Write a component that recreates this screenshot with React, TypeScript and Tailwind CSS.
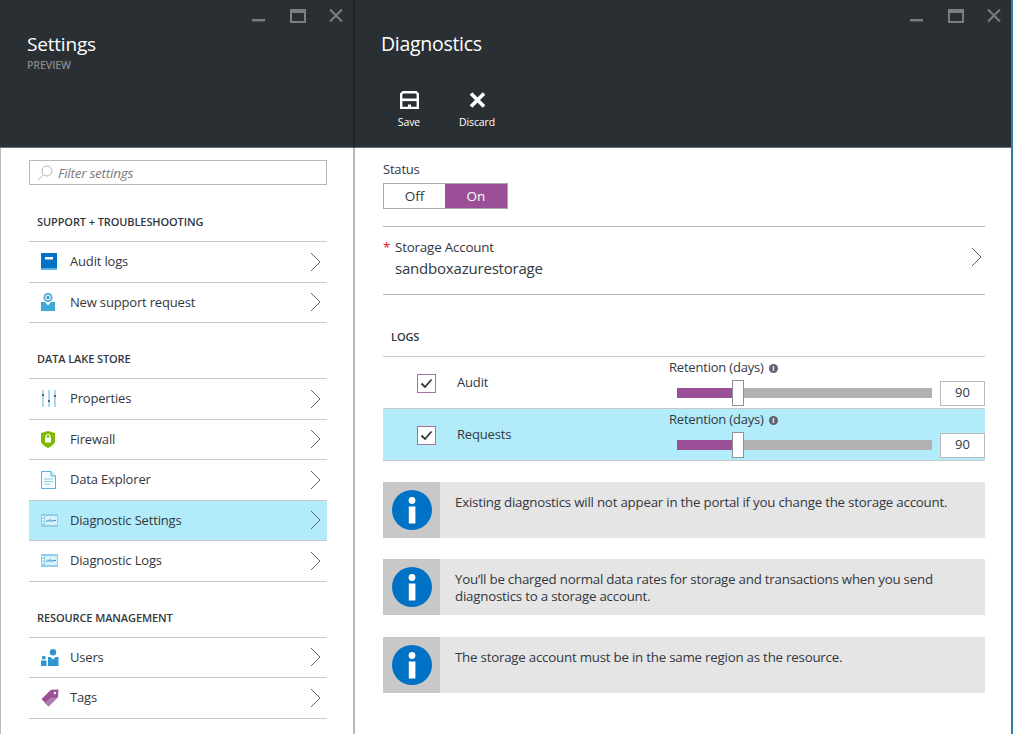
import type { ReactNode } from "react";

const font = "font-['Open_Sans','Noto_Sans',sans-serif]";

function WindowButtons() {
  return (
    <div className="flex h-[30px] items-start justify-end">
      <svg width="102" height="26" viewBox="0 0 102 26" fill="none">
        <rect x="11" y="19" width="13" height="2.4" fill="#7b7e81" />
        <rect x="50" y="10" width="14" height="12" stroke="#7b7e81" strokeWidth="2" />
        <rect x="49" y="9" width="16" height="4" fill="#7b7e81" />
        <path d="M89 9.5 L101 21.5 M101 9.5 L89 21.5" stroke="#7b7e81" strokeWidth="2" />
      </svg>
    </div>
  );
}

function Chevron({ className }: { className?: string }) {
  return (
    <svg width="11" height="20" viewBox="0 0 11 20" fill="none" className={className}>
      <path d="M1 1 L10 10 L1 19" stroke="#5f6368" strokeWidth="1" />
    </svg>
  );
}

function AuditIcon() {
  return (
    <svg width="16" height="18" viewBox="0 0 16 18">
      <rect width="16" height="17" fill="#0072c6" />
      <rect y="15" width="16" height="2" fill="#59b4d9" />
      <rect x="4" y="4" width="8" height="2.5" fill="#fff" />
    </svg>
  );
}

function SupportIcon() {
  return (
    <svg width="14" height="18" viewBox="0 0 14 18">
      <path d="M0 9 L4 9 L7 12.5 L10 9 L14 9 L14 18 L0 18 Z" fill="#3fa9d8" />
      <circle cx="7" cy="4.5" r="3.6" fill="#fff" stroke="#59b4d9" strokeWidth="2" />
      <circle cx="7" cy="4.5" r="1.5" fill="#1e8cc4" />
    </svg>
  );
}

function PropertiesIcon() {
  return (
    <svg width="16" height="17" viewBox="0 0 16 17">
      <rect x="1" width="2" height="17" fill="#a9d9ee" />
      <rect x="7" width="2" height="17" fill="#a9d9ee" />
      <rect x="13" width="2" height="17" fill="#a9d9ee" />
      <rect x="1" y="4" width="2" height="2" fill="#59606a" />
      <rect x="7" y="10" width="2" height="2" fill="#59606a" />
      <rect x="13" y="5" width="2" height="2" fill="#59606a" />
    </svg>
  );
}

function ShieldIcon() {
  return (
    <svg width="14" height="17" viewBox="0 0 14 17">
      <path d="M7 0 L14 2 L14 10 C14 13 10 15.5 7 17 C4 15.5 0 13 0 10 L0 2 Z" fill="#7fba00" />
      <rect x="4" y="6.5" width="6" height="5" fill="#fff" />
      <path d="M5 6.5 V5.5 A2 2 0 0 1 9 5.5 V6.5" fill="none" stroke="#fff" strokeWidth="1.2" />
    </svg>
  );
}

function DocIcon() {
  return (
    <svg width="15" height="18" viewBox="0 0 15 18">
      <path d="M0.5 0.5 H10 L14.5 5 V17.5 H0.5 Z" fill="#f3fbfe" stroke="#59b4d9" />
      <path d="M10 0.5 V5 H14.5" fill="#cdebf6" stroke="#59b4d9" />
      <path d="M3 8 H12 M3 10.5 H12 M3 13 H9" stroke="#8fcde6" />
    </svg>
  );
}

function DiagIcon() {
  return (
    <svg width="17" height="13" viewBox="0 0 17 13">
      <rect width="17" height="13" fill="#92d0e9" />
      <rect x="4" y="2" width="12" height="9" fill="#d8f0f9" />
      <rect x="1" y="2" width="2" height="1.5" fill="#fff" />
      <rect x="1" y="5" width="2" height="1.5" fill="#fff" />
      <rect x="1" y="8" width="2" height="1.5" fill="#fff" />
      <path d="M5 7 H8 L9 5.5 L10.5 8 L11.5 6.5 H15" fill="none" stroke="#3c9ccb" />
    </svg>
  );
}

function UsersIcon() {
  return (
    <svg width="18" height="17" viewBox="0 0 18 17">
      <circle cx="12" cy="3.2" r="3.2" fill="#2d96cf" />
      <path d="M7 8 H9.5 L12 10.5 L14.5 8 H17.5 V17 H7 Z" fill="#2d96cf" />
      <circle cx="2.8" cy="8.7" r="1.9" fill="#2d96cf" />
      <rect x="0" y="11.5" width="5.5" height="5.5" fill="#2d96cf" />
    </svg>
  );
}

function TagIcon() {
  return (
    <svg width="18" height="18" viewBox="0 0 18 18">
      <path d="M0.5 10 L10 0.8 L17.5 0.5 L17 8 L7.5 17.5 Z" fill="#9a4f97" />
      <path d="M9 9 L17 8 L7.5 17.5 L4 14 Z" fill="#b17cb0" />
      <circle cx="14" cy="4" r="1.2" fill="#fff" />
    </svg>
  );
}

function MenuRow({ icon, label, active }: { icon: ReactNode; label: string; active?: boolean }) {
  return (
    <div className={`flex h-[40.5px] items-center border-b border-[#c8c8c8] pr-[6px] ${active ? "bg-[#b2ebfa]" : ""}`}>
      <div className="flex w-[41px] shrink-0 items-center justify-start pl-[12px]">{icon}</div>
      <span className="flex-1 text-[13px] tracking-[-0.17px] text-[#32383f]">{label}</span>
      <Chevron />
    </div>
  );
}

function SectionLabel({ children, className }: { children: ReactNode; className: string }) {
  return (
    <div className={`border-b border-[#c8c8c8] pb-[12px] pl-[8px] text-[11px] font-semibold leading-[14px] tracking-[-0.1px] text-[#32383f] ${className}`}>
      {children}
    </div>
  );
}

function Slider() {
  return (
    <div className="w-[316px] shrink-0 self-start pt-[3px]">
      <div className="flex h-[16px] items-center gap-[5px] text-[13px] tracking-[-0.2px] text-[#32383f]">
        Retention (days)
        <span className="flex h-[9px] w-[9px] items-center justify-center rounded-full bg-[#5f6368] text-[7px] font-bold leading-none text-white">i</span>
      </div>
      <div className="mt-[2px] flex h-[30px] items-center pl-[8px]">
        <div className="h-[10px] w-[56px] bg-[#9b4f96]" />
        <div className="z-10 h-[26px] w-[12px] -ml-[1px] border border-[#8f9296] bg-white" />
        <div className="h-[10px] w-[188px] bg-[#b1b1b1]" />
        <div className="ml-[8px] flex h-[25px] w-[45px] items-center justify-center border border-[#b8b8b8] bg-white text-[13px] text-[#32383f]">
          90
        </div>
      </div>
    </div>
  );
}

function LogRow({ label, active }: { label: string; active?: boolean }) {
  return (
    <div className={`flex h-[52px] items-center border-b border-[#c8c8c8] ${active ? "bg-[#b2ebfa]" : ""}`}>
      <div className="mt-[1px] flex w-[74px] shrink-0 justify-start pl-[34px]">
        <div className="flex h-[19px] w-[19px] items-center justify-center border border-[#a96fa5] bg-white">
          <svg width="13" height="11" viewBox="0 0 13 11" fill="none">
            <path d="M1.5 5.5 L5 9 L11.5 1.5" stroke="#32383f" strokeWidth="1.8" />
          </svg>
        </div>
      </div>
      <span className="flex-1 text-[13px] tracking-[-0.17px] text-[#32383f]">{label}</span>
      <Slider />
    </div>
  );
}

function InfoBox({ children, className }: { children: ReactNode; className: string }) {
  return (
    <div className={`flex h-[56px] bg-[#e5e5e5] ${className}`}>
      <div className="flex w-[57px] shrink-0 items-center justify-center bg-[#c8c8c8]">
        <svg width="40" height="40" viewBox="0 0 40 40">
          <circle cx="20" cy="20" r="20" fill="#0072c6" />
          <circle cx="20" cy="10.5" r="3.4" fill="#fff" />
          <rect x="16.8" y="16.5" width="6.6" height="17" fill="#fff" />
        </svg>
      </div>
      <div className="pl-[15px] pt-[12px] text-[13.3px] leading-[17px] tracking-[-0.22px] text-[#32383f]">{children}</div>
    </div>
  );
}

export default function App() {
  return (
    <div className={`flex h-[734px] w-[1013px] overflow-hidden bg-white ${font}`}>
      <div className="flex w-[355px] shrink-0 flex-col">
        <header className="h-[148px] shrink-0 border-b border-r-2 border-b-[#6d7073] border-r-[#1f2326] bg-[#2a2f33] pr-[10px]">
          <WindowButtons />
          <h1 className="ml-[27px] mt-[1px] text-[19px] font-normal leading-[26px] tracking-[-0.2px] text-white">Settings</h1>
          <div className="ml-[27px] mt-[1px] text-[10.5px] font-semibold leading-[14px] tracking-[-0.1px] text-[#85888b]">PREVIEW</div>
        </header>
        <div className="flex flex-1 flex-col border-l border-r-2 border-l-[#b8b8b8] border-r-[#b8b8b8] pl-[28px] pr-[26px]">
          <div className="mt-[12px] flex h-[25px] items-center border border-[#b8b8b8] pl-[7px]">
            <svg width="16" height="16" viewBox="0 0 16 16" fill="none">
              <circle cx="10" cy="6" r="5" stroke="#b5b5b5" />
              <path d="M6.5 9.5 L1 15" stroke="#b5b5b5" />
            </svg>
            <span className="ml-[5px] mt-[1px] text-[13.5px] italic tracking-[-0.25px] text-[#7a7a7a]">Filter settings</span>
          </div>
          <SectionLabel className="mt-[30px]">SUPPORT + TROUBLESHOOTING</SectionLabel>
          <MenuRow icon={<AuditIcon />} label="Audit logs" />
          <MenuRow icon={<SupportIcon />} label="New support request" />
          <SectionLabel className="mt-[29px]">DATA LAKE STORE</SectionLabel>
          <MenuRow icon={<PropertiesIcon />} label="Properties" />
          <MenuRow icon={<ShieldIcon />} label="Firewall" />
          <MenuRow icon={<DocIcon />} label="Data Explorer" />
          <MenuRow icon={<DiagIcon />} label="Diagnostic Settings" active />
          <MenuRow icon={<DiagIcon />} label="Diagnostic Logs" />
          <SectionLabel className="mt-[29px]">RESOURCE MANAGEMENT</SectionLabel>
          <MenuRow icon={<UsersIcon />} label="Users" />
          <MenuRow icon={<TagIcon />} label="Tags" />
        </div>
      </div>

      <div className="flex flex-1 flex-col border-r-2 border-r-[#2f7fae]">
        <header className="h-[148px] shrink-0 border-b border-[#6d7073] bg-[#2a2f33] pr-[10px]">
          <WindowButtons />
          <h1 className="ml-[26px] mt-[1px] text-[19.5px] font-normal leading-[26px] tracking-[-0.3px] text-white">Diagnostics</h1>
          <div className="ml-[26px] mt-[34px] flex">
            <div className="flex w-[56px] flex-col items-center">
              <svg width="19" height="18" viewBox="0 0 19 18" fill="none">
                <path d="M1.2 17 V3 L3 1.2 H16 L17.8 3 V17 Z" stroke="#fff" strokeWidth="2.4" />
                <rect x="1" y="7.5" width="17" height="2.6" fill="#fff" />
                <rect x="8" y="13.5" width="3" height="3" fill="#fff" />
              </svg>
              <span className="mt-[6px] text-[10.5px] leading-[14px] tracking-[-0.1px] text-white">Save</span>
            </div>
            <div className="ml-[12px] flex w-[56px] flex-col items-center">
              <svg width="19" height="18" viewBox="0 0 19 18" fill="none">
                <path d="M3 2.5 L16 15.5 M16 2.5 L3 15.5" stroke="#fff" strokeWidth="3.6" />
              </svg>
              <span className="mt-[6px] text-[10.5px] leading-[14px] tracking-[-0.1px] text-white">Discard</span>
            </div>
          </div>
        </header>
        <div className="flex-1 pl-[28px] pr-[26px] text-[#32383f]">
          <div className="mt-[13px] text-[13px] leading-[17px] tracking-[-0.2px]">Status</div>
          <div className="mt-[5px] flex h-[26px] w-[125px] border border-[#a8a8a8] text-[13.5px]">
            <div className="flex flex-1 items-center justify-center bg-white">Off</div>
            <div className="flex w-[62px] items-center justify-center bg-[#9b4f96] text-white">On</div>
          </div>
          <div className="mt-[17px] flex h-[69px] items-center border-y border-[#b8b8b8] pb-[5px] pr-[3px]">
            <div className="flex-1">
              <div className="flex text-[13.4px] leading-[18px] tracking-[-0.2px]">
                <span className="w-[12px] text-[#e81123]">*</span>
                Storage Account
              </div>
              <div className="ml-[12px] mt-[2px] text-[15px] leading-[20px] tracking-[-0.2px]">sandboxazurestorage</div>
            </div>
            <Chevron className="mb-[2px]" />
          </div>
          <div className="mt-[35px] border-b border-[#c8c8c8] pb-[12px] pl-[8px] text-[11px] font-semibold leading-[14px] tracking-[-0.1px]">LOGS</div>
          <LogRow label="Audit" />
          <LogRow label="Requests" active />
          <div className="flex flex-col">
            <InfoBox className="mt-[21px]">Existing diagnostics will not appear in the portal if you change the storage account.</InfoBox>
            <InfoBox className="mt-[21px]">
              You’ll be charged normal data rates for storage and transactions when you send
              <br />
              diagnostics to a storage account.
            </InfoBox>
            <InfoBox className="mt-[22px]">The storage account must be in the same region as the resource.</InfoBox>
          </div>
        </div>
      </div>
    </div>
  );
}
